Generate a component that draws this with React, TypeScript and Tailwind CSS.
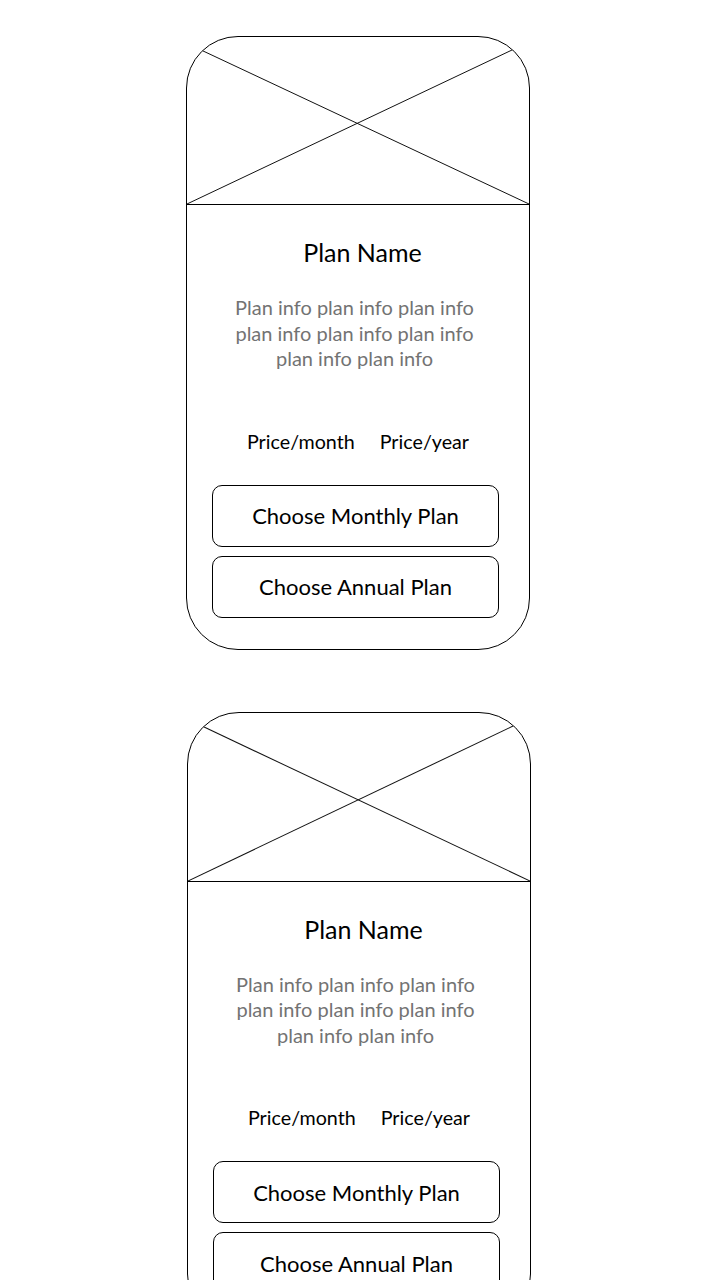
import React from 'react';

function PlaceholderImage({ tall }: { tall?: boolean }) {
  return (
    <div className={`relative border-b border-black ${tall ? 'h-[169px]' : 'h-[168px]'}`}>
      <svg className="absolute inset-0 h-full w-full" viewBox="0 0 342 167" preserveAspectRatio="none">
        <line x1="14" y1="13" x2="342" y2="167" stroke="#111" strokeWidth="1" />
        <line x1="0" y1="167" x2="325" y2="13" stroke="#111" strokeWidth="1" />
      </svg>
    </div>
  );
}

function PlanCard({ offset, tall }: { offset: string; tall?: boolean }) {
  return (
    <div className={`w-[344px] rounded-[52px] border border-black overflow-hidden bg-white ${offset}`}>
      <PlaceholderImage tall={tall} />
      <div className="mt-[32px] pl-[9px] text-center text-[25px] leading-[30px] text-black">Plan Name</div>
      <p className="mt-[28px] pr-[7px] text-center text-[20px] leading-[25.5px] text-[#737373]">
        Plan info plan info plan info
        <br />
        plan info plan info plan info
        <br />
        plan info plan info
      </p>
      <div className="mt-[58px] flex justify-center gap-[25px] text-[19.7px] leading-[24px] text-black">
        <span>Price/month</span>
        <span>Price/year</span>
      </div>
      <div className="mt-[31px] ml-[25px] w-[287px] flex flex-col gap-[9px] pb-[31px]">
        <button className="h-[62px] rounded-[10px] border border-black text-[22px] text-black">
          Choose Monthly Plan
        </button>
        <button className="h-[62px] rounded-[10px] border border-black text-[22px] text-black">
          Choose Annual Plan
        </button>
      </div>
    </div>
  );
}

export default function App() {
  return (
    <div className="min-h-[1280px] bg-white pt-[36px]" style={{ fontFamily: 'Lato, "Open Sans", sans-serif' }}>
      <PlanCard offset="ml-[186px]" />
      <div className="mt-[62px]">
        <PlanCard offset="ml-[187px]" tall />
      </div>
    </div>
  );
}
